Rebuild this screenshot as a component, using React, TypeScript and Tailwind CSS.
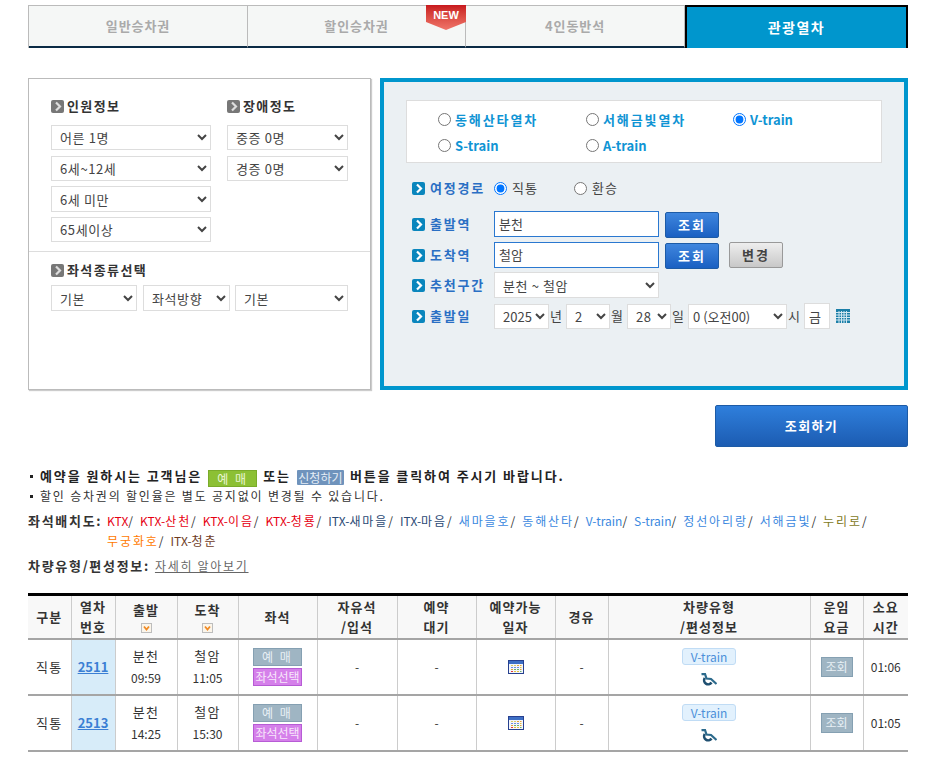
import React from "react";

function Arrow({ blue }: { blue?: boolean }) {
  return (
    <svg width="13" height="13" viewBox="0 0 13 13" className="shrink-0">
      <rect width="13" height="13" rx="2" fill={blue ? "#0a86bd" : "#777"} />
      <path d="M5 2.500 L9 6.500 L5 10.500" fill="none" stroke={blue ? "#fff" : "#ddd"} strokeWidth="2.200" />
    </svg>
  );
}

function Sel({ className, pad = "pl-[4px]", tr = "tracking-[0.6px]", children }: { className: string; pad?: string; tr?: string; children: string }) {
  return (
    <select defaultValue={children} className={`border border-[#dddddd] bg-white text-[13px] text-[#444] ${tr} ${pad} ${className}`}>
      <option>{children}</option>
    </select>
  );
}

function Title({ children }: { children: string }) {
  return (
    <div className="flex items-center gap-[3px] h-[16px] text-[13px] font-bold text-[#333] tracking-[1.400px]">
      <Arrow />
      <span>{children}</span>
    </div>
  );
}

function Lab({ children }: { children: string }) {
  return (
    <div className="w-[82px] shrink-0 flex items-center gap-[5px] text-[13px] font-bold text-[#2a6fc4] tracking-[1.800px]">
      <Arrow blue />
      <span>{children}</span>
    </div>
  );
}

function Blue({ children }: { children: string }) {
  return (
    <button className="w-[54px] h-[26px] rounded-[2px] border border-[#1d5ba6] bg-gradient-to-b from-[#3f86de] to-[#1a60c2] text-white text-[13px] font-bold tracking-[2px]">
      {children}
    </button>
  );
}

function Rad({ label, checked, latin, className }: { label: string; checked?: boolean; latin?: boolean; className: string }) {
  return (
    <label className={`flex items-center gap-[4px] text-[13px] font-bold text-[#0f94d4] ${latin ? "tracking-normal" : "tracking-[1.900px]"} ${className}`}>
      <input type="radio" name="kind" defaultChecked={checked} />
      <span>{label}</span>
    </label>
  );
}

function CalBig() {
  return (
    <svg width="14" height="14" viewBox="0 0 14 14" className="shrink-0">
      <rect width="14" height="14" fill="#1b7fa8" />
      <path d="M0 3.500H14M0 6H14M0 8.500H14M0 11H14M3 2V14M5.500 2V14M8 2V14M10.500 2V14" stroke="#cfe6f0" strokeWidth="1" />
    </svg>
  );
}

function CalSmall() {
  return (
    <svg width="16" height="14" viewBox="0 0 16 14" className="mx-auto block">
      <rect x="0.500" y="0.500" width="15" height="13" fill="#f4f6fb" stroke="#27408f" />
      <rect x="1" y="1" width="14" height="3" fill="#3d6fc5" />
      <path d="M3 5h2v1H3zM6 5h2v1H6z" fill="#d9cf6a" />
      <path d="M9 5h2v1H9zM12 5h1.500v1H12z" fill="#e8a43a" />
      <path d="M3 7h2v1H3zM6 7h2v1H6zM9 7h2v1H9z" fill="#6f8ee0" />
      <path d="M12 7h1.500v1H12z" fill="#e3c13a" />
      <path d="M3 9h2v1H3zM12 9h1.500v1H12z" fill="#e3a13a" />
      <path d="M6 9h2v1H6zM9 9h2v1H9z" fill="#6bb26b" />
      <path d="M3 11h2v1H3z" fill="#e33a3a" />
      <path d="M6 11h2v1H6zM9 11h2v1H9z" fill="#e3c13a" />
      <path d="M12 11h1.500v1H12z" fill="#6bb26b" />
    </svg>
  );
}

function Wheel() {
  return (
    <svg width="16" height="13" viewBox="0 0 16 13" className="mx-auto block">
      <path d="M0.500 1.200 L4 1 L5.500 5.500 L10 6 L15.500 11" fill="none" stroke="#2c6a8c" strokeWidth="2.200" />
      <path d="M3.800 5 A3.600 3.600 0 1 0 10.500 9.500" fill="none" stroke="#1f4f70" strokeWidth="2.600" />
    </svg>
  );
}

function Sort() {
  return (
    <svg width="11" height="10" viewBox="0 0 11 10" className="mx-auto mt-[3px] block">
      <rect x="0.500" y="0.500" width="10" height="9" fill="#fbf5ea" stroke="#bdbdbd" />
      <path d="M3 3.500 L5.500 6.500 L8 3.500" fill="none" stroke="#f08a24" strokeWidth="1.800" />
    </svg>
  );
}

function Tab({ w, children }: { w: string; children: string }) {
  return (
    <div className={`${w} h-full flex items-center justify-center border-t border-r border-[#bbbbbb] bg-[#f5f7f6] border-b-2 border-b-[#0b2b45] text-[13px] font-bold text-[#aaaaaa] tracking-[0.900px]`}>
      {children}
    </div>
  );
}

function Lk({ c, a, b }: { c: string; a?: string; b?: string }) {
  return (
    <span className={c}>
      {a}
      {b ? <span className="tracking-[1.900px]">{b}</span> : null}
    </span>
  );
}

function Sl({ last }: { last?: boolean }) {
  return <span className={last ? "mr-0" : "mr-[7px]"}>/</span>;
}

function Row({ no, from, to, fare }: { no: string; from: string; to: string; fare: string }) {
  const cell = "border-r border-[#cccccc] border-b-2 border-b-[#a5a5a5] text-center p-0 align-middle";
  return (
    <tr className="h-[56px] text-[12px] text-[#333]">
      <td className={`${cell} text-[13px] tracking-[1.200px]`}>직통</td>
      <td className={`${cell} bg-[#d7ecf9]`}>
        <a className="text-[13px] font-bold text-[#3b7fd4] underline">{no}</a>
      </td>
      <td className={cell}>
        <div className="leading-[22px] text-[13px] tracking-[1.200px]">분천</div>
        <div className="leading-[22px]">{from}</div>
      </td>
      <td className={cell}>
        <div className="leading-[22px] text-[13px] tracking-[1.200px]">철암</div>
        <div className="leading-[22px]">{to}</div>
      </td>
      <td className={cell}>
        <div className="mx-auto w-[49px] h-[18px] mb-[2px] bg-[#9fb5c3] border border-[#85a0b2] text-[#e8f0f5] text-[12px] leading-[16px] tracking-[2px]">예 매</div>
        <div className="mx-auto w-[49px] h-[18px] bg-[#d580ea] border border-[#b75cd5] text-[#f8e8fb] text-[12px] leading-[16px]">좌석선택</div>
      </td>
      <td className={cell}>-</td>
      <td className={cell}>-</td>
      <td className={cell}><CalSmall /></td>
      <td className={cell}>-</td>
      <td className={cell}>
        <div className="mx-auto w-[54px] h-[17px] mb-[8px] rounded-[3px] bg-[#e2f1fd] border border-[#c0dcf5] text-[#4a8fd9] text-[12px] leading-[15px]">V-train</div>
        <Wheel />
      </td>
      <td className={cell}>
        <div className="mx-auto w-[32px] h-[20px] bg-[#9fb5c3] border border-[#85a0b2] text-[#e8f0f5] text-[12px] leading-[18px]">조회</div>
      </td>
      <td className="border-b-2 border-b-[#a5a5a5] text-center p-0 align-middle">{fare}</td>
    </tr>
  );
}

function Bullet() {
  return <span className="inline-block w-[3px] h-[3px] bg-[#222] mr-[7px] align-[3px]" />;
}

export default function App() {
  const th = "border-r border-[#cccccc] border-b-2 border-b-[#a5a5a5] bg-[#f8f8f8] font-bold text-center p-0 align-middle leading-[20px] text-[13px] tracking-[1px]";
  return (
    <div className="w-[935px] h-[762px] overflow-hidden bg-white pl-[28px] pt-[5px] font-['Noto_Sans_CJK_KR',sans-serif] text-[#222]">
      <div className="w-[880px]">
        <div className="relative flex h-[43px] border-l border-[#bbbbbb]">
          <Tab w="w-[219px]">일반승차권</Tab>
          <Tab w="w-[218px]">할인승차권</Tab>
          <Tab w="w-[219px]">4인동반석</Tab>
          <div className="flex-1 h-full flex items-center justify-center bg-[#0096cd] border-x-2 border-t-2 border-black text-[14px] font-bold text-white tracking-[1.500px]">
            관광열차
          </div>
          <div className="absolute left-[397px] top-0 w-[40px] h-[25px] bg-gradient-to-b from-[#c8161d] to-[#f0756a] [clip-path:polygon(0_0,100%_0,100%_68%,50%_100%,0_68%)] text-center text-[11px] leading-[20px] font-bold text-white font-['Liberation_Sans',sans-serif]">
            NEW
          </div>
        </div>

        <div className="flex mt-[30px] h-[312px] gap-[9px]">
          <div className="w-[343px] border border-[#bbbbbb] shadow-[1px_1px_1px_#cccccc] pt-[19px]">
            <div className="flex pl-[22px] gap-[16px]">
              <div className="w-[160px]">
                <Title>인원정보</Title>
                <Sel className="w-[160px] h-[25px] mt-[11px] block">어른 1명</Sel>
                <Sel className="w-[160px] h-[25px] mt-[6px] block">6세~12세</Sel>
                <Sel className="w-[160px] h-[26px] mt-[5px] block">6세 미만</Sel>
                <Sel className="w-[160px] h-[25px] mt-[5px] block">65세이상</Sel>
              </div>
              <div className="w-[121px]">
                <Title>장애정도</Title>
                <Sel className="w-[121px] h-[25px] mt-[11px] block">중증 0명</Sel>
                <Sel className="w-[121px] h-[25px] mt-[6px] block">경증 0명</Sel>
              </div>
            </div>
            <div className="mt-[9px] border-t border-[#dddddd] pl-[22px] pt-[10px]">
              <Title>좌석종류선택</Title>
              <div className="flex mt-[7px]">
                <Sel className="w-[86px] h-[26px]">기본</Sel>
                <Sel className="w-[87px] h-[26px] ml-[6px]">좌석방향</Sel>
                <Sel className="w-[113px] h-[26px] ml-[5px]">기본</Sel>
              </div>
            </div>
          </div>

          <div className="flex-1 border-4 border-[#0096cd] bg-[#ebf0f3] px-[22px] pt-[18px]">
            <div className="h-[63px] bg-white border border-[#dddddd] pl-[31px] pt-[9px]">
              <div className="flex h-[19px]">
                <Rad className="w-[148px]" label="동해산타열차" />
                <Rad className="w-[147px]" label="서해금빛열차" />
                <Rad className="" label="V-train" latin checked />
              </div>
              <div className="flex h-[19px] mt-[7px]">
                <Rad className="w-[148px]" label="S-train" latin />
                <Rad className="" label="A-train" latin />
              </div>
            </div>

            <div className="pl-[6px]">
              <div className="flex h-[22px] mt-[14px]">
                <Lab>여정경로</Lab>
                <label className="flex items-center gap-[5px] text-[13px] tracking-[1px] text-[#444] w-[80px]">
                  <input type="radio" name="route" defaultChecked />
                  <span>직통</span>
                </label>
                <label className="flex items-center gap-[5px] text-[13px] tracking-[1px] text-[#444]">
                  <input type="radio" name="route" />
                  <span>환승</span>
                </label>
              </div>

              <div className="flex h-[26px] mt-[12px] items-stretch">
                <Lab>출발역</Lab>
                <input defaultValue="분천" className="w-[165px] border border-[#2a78d0] bg-white pl-[4px] text-[13px] text-[#444]" />
                <div className="ml-[6px]"><Blue>조회</Blue></div>
              </div>

              <div className="flex h-[26px] mt-[5px] items-stretch">
                <Lab>도착역</Lab>
                <input defaultValue="철암" className="w-[165px] border border-[#2a78d0] bg-white pl-[4px] text-[13px] text-[#444]" />
                <div className="ml-[6px]"><Blue>조회</Blue></div>
                <button className="ml-[10px] w-[54px] h-[26px] rounded-[2px] border border-[#999999] bg-gradient-to-b from-[#eeeeee] to-[#c8c8c8] text-[13px] font-bold text-[#444] tracking-[2px]">
                  변경
                </button>
              </div>

              <div className="flex h-[26px] mt-[4px] items-stretch">
                <Lab>추천구간</Lab>
                <Sel className="w-[165px] h-[26px]">분천 ~ 철암</Sel>
              </div>

              <div className="flex h-[26px] mt-[5px] items-center text-[13px] text-[#444]">
                <Lab>출발일</Lab>
                <Sel tr="tracking-normal" className="w-[55px] h-[25px]">2025</Sel>
                <span className="w-[17px] pl-[1px]">년</span>
                <Sel className="w-[44px] h-[25px]">2</Sel>
                <span className="w-[17px] pl-[1px]">월</span>
                <Sel className="w-[44px] h-[25px]">28</Sel>
                <span className="w-[17px] pl-[1px]">일</span>
                <Sel pad="pl-0" tr="tracking-normal" className="w-[99px] h-[25px]">0 (오전00)</Sel>
                <span className="w-[17px] pl-[1px]">시</span>
                <input defaultValue="금" className="w-[26px] h-[26px] border border-[#dddddd] bg-white pl-[4px] text-[13px] text-[#444]" />
                <div className="ml-[6px]"><CalBig /></div>
              </div>
            </div>
          </div>
        </div>

        <div className="flex justify-end mt-[15px]">
          <button className="w-[193px] h-[42px] rounded-[2px] border border-[#1d5ba6] bg-gradient-to-b from-[#2f7fdc] to-[#1c5cb2] text-white text-[13px] font-bold tracking-[1.400px]">
            조회하기
          </button>
        </div>

        <div className="mt-[19px] text-[12px] leading-[20px]">
          <div className="pl-[2px] h-[20px] font-bold text-[#222] tracking-[1.900px] whitespace-nowrap text-[13px]">
            <Bullet />예약을 원하시는 고객님은
            <span className="inline-block w-[49px] h-[17px] mx-[6px] align-[-3px] bg-[#8cc034] border border-[#7aab2a] text-center text-[12px] font-normal leading-[15px] tracking-[2px] text-[#eaf6d5]">예 매</span>
            또는
            <span className="inline-block w-[47px] h-[15px] mx-[6px] align-[-2px] rounded-[1px] bg-[#6f93bc] text-center text-[12px] font-normal leading-[15px] tracking-normal text-[#e6eef6]">신청하기</span>
            버튼을 클릭하여 주시기 바랍니다.
          </div>
          <div className="pl-[2px] h-[20px] text-[#333] tracking-[1.800px] whitespace-nowrap">
            <Bullet />할인 승차권의 할인율은 별도 공지없이 변경될 수 있습니다.
          </div>

          <div className="flex mt-[5px] h-[20px] whitespace-nowrap">
            <b className="w-[79px] text-[#333] text-[13px] tracking-[1.700px]">좌석배치도:</b>
            <div className="text-[12px] text-[#333]">
              <Lk c="text-[#e60012]" a="KTX" /><Sl />
              <Lk c="text-[#e60012]" a="KTX-" b="산천" /><Sl />
              <Lk c="text-[#e60012]" a="KTX-" b="이음" /><Sl />
              <Lk c="text-[#e60012]" a="KTX-" b="청룡" /><Sl />
              <Lk c="text-[#2b4a75]" a="ITX-" b="새마을" /><Sl />
              <Lk c="text-[#2b4a75]" a="ITX-" b="마음" /><Sl />
              <Lk c="text-[#3b88e0]" b="새마을호" /><Sl />
              <Lk c="text-[#3b88e0]" b="동해산타" /><Sl />
              <Lk c="text-[#3b88e0]" a="V-train" /><Sl />
              <Lk c="text-[#3b88e0]" a="S-train" /><Sl />
              <Lk c="text-[#3b88e0]" b="정선아리랑" /><Sl />
              <Lk c="text-[#3b88e0]" b="서해금빛" /><Sl />
              <Lk c="text-[#7f7a1e]" b="누리로" /><Sl last />
            </div>
          </div>
          <div className="flex h-[20px] whitespace-nowrap">
            <div className="w-[79px]" />
            <div className="text-[12px] text-[#333]">
              <Lk c="text-[#ff7a00]" b="무궁화호" /><Sl />
              <Lk c="text-[#6e3b1e]" a="ITX-" b="청춘" />
            </div>
          </div>

          <div className="flex mt-[5px] h-[20px] whitespace-nowrap">
            <b className="text-[#333] text-[13px] tracking-[1.700px]">차량유형/편성정보:</b>
            <a className="ml-[5px] underline text-[#666] tracking-[1.700px]">자세히 알아보기</a>
          </div>
        </div>

        <table className="mt-[17px] w-[880px] table-fixed border-collapse border-t-[3px] border-t-black text-[12px] text-[#333]">
          <colgroup>
            <col className="w-[43px]" /><col className="w-[44px]" /><col className="w-[62px]" /><col className="w-[61px]" />
            <col className="w-[79px]" /><col className="w-[80px]" /><col className="w-[79px]" /><col className="w-[79px]" />
            <col className="w-[53px]" /><col className="w-[202px]" /><col className="w-[53px]" /><col className="w-[45px]" />
          </colgroup>
          <thead>
            <tr className="h-[44px]">
              <th className={th}>구분</th>
              <th className={th}>열차<br />번호</th>
              <th className={th}>출발<Sort /></th>
              <th className={th}>도착<Sort /></th>
              <th className={th}>좌석</th>
              <th className={th}>자유석<br />/입석</th>
              <th className={th}>예약<br />대기</th>
              <th className={th}>예약가능<br />일자</th>
              <th className={th}>경유</th>
              <th className={th}>차량유형<br />/편성정보</th>
              <th className={th}>운임<br />요금</th>
              <th className="border-b-2 border-b-[#a5a5a5] bg-[#f8f8f8] font-bold text-center p-0 align-middle leading-[20px] text-[13px] tracking-[1px]">소요<br />시간</th>
            </tr>
          </thead>
          <tbody>
            <Row no="2511" from="09:59" to="11:05" fare="01:06" />
            <Row no="2513" from="14:25" to="15:30" fare="01:05" />
          </tbody>
        </table>
      </div>
    </div>
  );
}
